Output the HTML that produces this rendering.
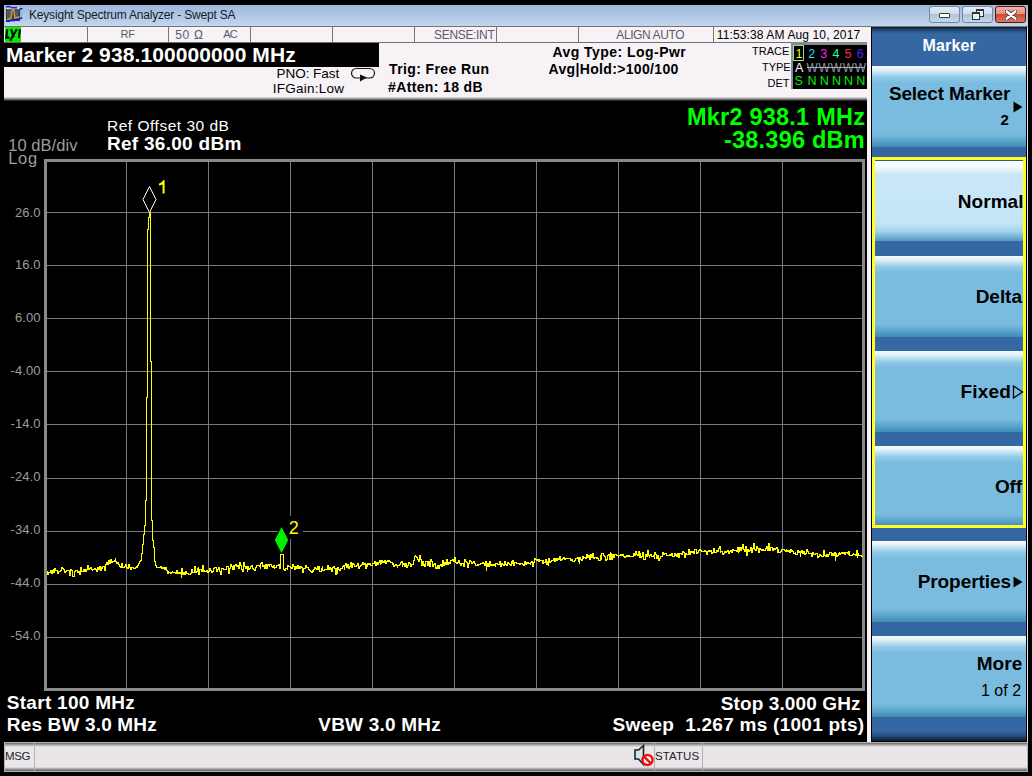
<!DOCTYPE html>
<html><head><meta charset="utf-8">
<style>
*{margin:0;padding:0;box-sizing:border-box}
html,body{width:1032px;height:776px;overflow:hidden;background:#000}
body{position:relative;font-family:"Liberation Sans",sans-serif}
.a{position:absolute}
.t{position:absolute;white-space:nowrap;line-height:1}
</style></head><body>
<!-- title bar -->
<div class="a" style="left:4px;top:5px;width:1024px;height:22px;background:linear-gradient(#9db8d9,#afc7e4 50%,#c3d7ed);border-bottom:1px solid #747474"></div>
<svg class="a" style="left:4px;top:4px" width="22" height="22" viewBox="0 0 22 22">
<rect x="2" y="5" width="14" height="12" fill="#3c3a3a"/>
<rect x="3" y="6" width="4" height="8" fill="#5a5858"/><rect x="10.5" y="6.5" width="4" height="7" fill="#5a5858"/>
<rect x="2" y="3.2" width="14" height="2" fill="#d8d4c8"/>
<rect x="2" y="2" width="5" height="1.5" fill="#2020ff"/><rect x="7" y="3" width="6" height="1.5" fill="#2020f0"/>
<rect x="16" y="5" width="2.2" height="9" fill="#7cc0e8"/><rect x="15.5" y="4" width="2.8" height="1.5" fill="#1010e0"/><rect x="15.5" y="13.5" width="2.8" height="1.5" fill="#1010e0"/>
<rect x="2" y="16.5" width="4" height="1.5" fill="#1010e0"/><rect x="6" y="15.8" width="5" height="1.5" fill="#1010e0"/><rect x="11" y="15" width="5" height="1.5" fill="#1010e0"/>
<polyline points="3,15.5 7,14.5 8.2,5.5 9.8,5.5 10.8,14 15.5,13" fill="none" stroke="#c8a840" stroke-width="1.4"/>
</svg>
<div class="t" style="left:29px;top:9px;font-size:12px;letter-spacing:-0.19px;color:#141c2c;">Keysight Spectrum Analyzer - Swept SA</div>
<div class="a" style="left:929px;top:6px;width:31px;height:17px;border:1px solid #7487a0;border-radius:3px;background:linear-gradient(#e3ebf5,#cfdcec 45%,#afc4dc 50%,#c5d6ea)"><div class="a" style="left:9px;top:6px;width:11px;height:5px;background:#fff;border:1px solid #3a3a3a;border-radius:1px"></div></div>
<div class="a" style="left:962px;top:6px;width:31px;height:17px;border:1px solid #7487a0;border-radius:3px;background:linear-gradient(#e3ebf5,#cfdcec 45%,#afc4dc 50%,#c5d6ea)"><div class="a" style="left:13px;top:2px;width:8px;height:8px;background:#e8f0f8;border:1px solid #333;border-top-width:2px"></div><div class="a" style="left:9px;top:5px;width:8px;height:8px;background:#e8f0f8;border:1px solid #333;border-top-width:2px"></div></div>
<div class="a" style="left:995px;top:6px;width:31px;height:17px;border:1px solid #5a1010;border-radius:3px;background:linear-gradient(#f2b5a5,#e5907c 45%,#cd4a2e 50%,#dc7a62)"><svg class="a" style="left:9px;top:3px" width="12" height="10" viewBox="0 0 12 10"><path d="M1.8 1.5 L10.2 8.5 M10.2 1.5 L1.8 8.5" stroke="#3a3a3a" stroke-width="4.2" stroke-linecap="round"/><path d="M1.8 1.5 L10.2 8.5 M10.2 1.5 L1.8 8.5" stroke="#fff" stroke-width="2.6" stroke-linecap="round"/></svg></div>

<!-- status row -->
<div class="a" style="left:4px;top:27px;width:863px;height:16px;background:#f6f2f6;border-bottom:1px solid #6e6e6e"></div>
<div class="a" style="left:5px;top:27px;width:16px;height:15px;background:#00f000"></div>
<svg class="a" style="left:0;top:0" width="24" height="44" viewBox="0 0 24 44"><path d="M7.3 29.3 L6.2 37.6 L9.4 37.6 M11.2 29.3 L13.6 37.2 M16.8 29.3 L10.2 40.6 M19.9 29.3 L18.8 38.2" fill="none" stroke="#000" stroke-width="2.1"/></svg>
<div class="a" style="left:87px;top:27px;width:1px;height:15px;background:#777"></div><div class="a" style="left:168px;top:27px;width:1px;height:15px;background:#777"></div><div class="a" style="left:250px;top:27px;width:1px;height:15px;background:#777"></div><div class="a" style="left:332px;top:27px;width:1px;height:15px;background:#777"></div><div class="a" style="left:414px;top:27px;width:1px;height:15px;background:#777"></div><div class="a" style="left:496px;top:27px;width:1px;height:15px;background:#777"></div><div class="a" style="left:578px;top:27px;width:1px;height:15px;background:#777"></div><div class="a" style="left:713px;top:27px;width:1px;height:15px;background:#777"></div>
<div class="t" style="left:120.5px;top:29px;font-size:11px;letter-spacing:-0.1px;color:#5a5a6a;">RF</div><div class="t" style="left:175.2px;top:29px;font-size:12px;letter-spacing:0.7px;color:#5a5a6a;">50 Ω</div><div class="t" style="left:223.3px;top:29px;font-size:11px;letter-spacing:-0.8px;color:#5a5a6a;">AC</div><div class="t" style="left:434.1px;top:29.2px;font-size:12px;letter-spacing:-0.34px;color:#5a5a6a;">SENSE:INT</div><div class="t" style="left:616.3px;top:28.8px;font-size:12px;letter-spacing:-0.4px;color:#5a5a6a;">ALIGN AUTO</div><div class="t" style="left:716.8px;top:28.9px;font-size:12px;letter-spacing:0.12px;color:#000;">11:53:38 AM Aug 10, 2017</div>

<!-- header -->
<div class="a" style="left:4px;top:43px;width:863px;height:58px;background:linear-gradient(#f6f2f6 0px,#f6f2f6 53.5px,#a8a4a8 55.5px,#484848 57px,#101010 58px)"></div>
<div class="a" style="left:4px;top:43px;width:375px;height:24px;background:#000"></div>
<div class="t" style="left:6px;top:44px;font-size:21px;letter-spacing:0.1px;font-weight:bold;color:#fff;">Marker 2 938.100000000 MHz</div>
<div class="t" style="left:276.6px;top:67.2px;font-size:13.5px;letter-spacing:-0.05px;color:#000;">PNO: Fast</div><div class="t" style="left:272.7px;top:82.1px;font-size:13.5px;letter-spacing:0.26px;color:#000;">IFGain:Low</div>
<svg class="a" style="left:350px;top:67px" width="27" height="16" viewBox="0 0 27 16">
<rect x="1.5" y="1.5" width="23" height="9.5" rx="4.7" fill="none" stroke="#111" stroke-width="1.2"/>
<polygon points="10,7.5 17,10.5 10,14.5" fill="#111"/>
</svg>
<div class="t" style="left:389.1px;top:62.4px;font-size:14px;letter-spacing:0.38px;font-weight:bold;color:#000;">Trig: Free Run</div><div class="t" style="left:388.1px;top:80.2px;font-size:14px;letter-spacing:0.35px;font-weight:bold;color:#000;">#Atten: 18 dB</div><div class="t" style="left:552.4px;top:45px;font-size:14px;letter-spacing:0.46px;font-weight:bold;color:#000;">Avg Type: Log-Pwr</div><div class="t" style="left:548.5px;top:62.3px;font-size:14px;letter-spacing:0.34px;font-weight:bold;color:#000;">Avg|Hold:&gt;100/100</div>
<div class="t" style="left:752.1px;top:46.2px;font-size:11px;letter-spacing:0.0px;color:#000;">TRACE</div><div class="t" style="left:762.1px;top:61.9px;font-size:11px;letter-spacing:-0.1px;color:#000;">TYPE</div><div class="t" style="left:767.5px;top:78px;font-size:11px;letter-spacing:0.0px;color:#000;">DET</div>
<div class="a" style="left:791px;top:42px;width:76px;height:47px;background:#000;border-top:3px solid #8a8a8a;border-left:2px solid #8a8a8a"></div>
<div class="a" style="left:793px;top:45px;width:11px;height:16px;border:1px solid #8ee08e"></div>
<div class="t" style="left:795.5px;top:47.5px;font-size:12.5px;color:#ffff00">1</div>
<div class="t" style="left:808.3px;top:47.5px;font-size:12.5px;color:#22ddff">2</div>
<div class="t" style="left:820.3px;top:47.5px;font-size:12.5px;color:#ff22ee">3</div>
<div class="t" style="left:832.4px;top:47.5px;font-size:12.5px;color:#22ff99">4</div>
<div class="t" style="left:844.6px;top:47.5px;font-size:12.5px;color:#ff2255">5</div>
<div class="t" style="left:856.8px;top:47.5px;font-size:12.5px;color:#5522ff">6</div>
<div class="t" style="left:795px;top:61.9px;font-size:12.5px;letter-spacing:0px;color:#fff;">A</div>
<div class="t" style="left:806.4px;top:62.3px;font-size:12px;color:#8a96a6">W</div><div class="t" style="left:818.5px;top:62.3px;font-size:12px;color:#8a96a6">W</div><div class="t" style="left:830.6px;top:62.3px;font-size:12px;color:#8a96a6">W</div><div class="t" style="left:842.7px;top:62.3px;font-size:12px;color:#8a96a6">W</div><div class="t" style="left:854.8px;top:62.3px;font-size:12px;color:#8a96a6">W</div>
<div class="a" style="left:807px;top:67px;width:58px;height:1px;background:#b8b0a8"></div>
<div class="t" style="left:807.5px;top:74.9px;font-size:12.5px;color:#00f000">N</div><div class="t" style="left:819.7px;top:74.9px;font-size:12.5px;color:#00f000">N</div><div class="t" style="left:831.9px;top:74.9px;font-size:12.5px;color:#00f000">N</div><div class="t" style="left:844.1px;top:74.9px;font-size:12.5px;color:#00f000">N</div><div class="t" style="left:856.3px;top:74.9px;font-size:12.5px;color:#00f000">N</div>
<div class="t" style="left:794.6px;top:75.1px;font-size:12.5px;letter-spacing:0px;color:#00f000;">S</div>

<!-- right strip + softkeys -->
<div class="a" style="left:867px;top:27px;width:4px;height:715px;background:#f6f2f6"></div>
<div class="a" style="left:871px;top:27px;width:157px;height:715px;background:#000"></div>
<div class="a" style="left:872px;top:27px;width:154px;height:714px;background:linear-gradient(#0c1a2c 0px,#204678 3px,#3568a3 7px,#3568a3 704px,#254b7e 709px,#0c1a2c 714px)"></div>
<div class="a" style="left:1027px;top:27px;width:1px;height:715px;background:#e8e4e8"></div>
<div class="t" style="left:922.6px;top:38.4px;font-size:16px;letter-spacing:0.12px;font-weight:bold;color:#fff;">Marker</div>
<div class="a" style="left:872px;top:66px;width:154px;height:81px;background:linear-gradient(#f8fcff 0px,#e0f0f8 4px,#92cae8 11px,#7abce0 17px,#7abce0 68px,#68aed4 72px,#3f8cb4 81px)"></div>
<div class="t" style="left:888.9px;top:84.4px;font-size:19px;letter-spacing:-0.18px;font-weight:bold;color:#000;">Select Marker</div><div class="t" style="left:1000.6px;top:112px;font-size:15px;letter-spacing:0px;font-weight:bold;color:#000;">2</div>
<svg class="a" style="left:1013px;top:101px" width="10" height="12" viewBox="0 0 10 12"><polygon points="0.5,0.5 9.5,6 0.5,11.5" fill="#000"/></svg>
<div class="a" style="left:872px;top:157px;width:154px;height:371px;border:3px solid #ffff22"></div>
<div class="a" style="left:875px;top:160px;width:148px;height:1px;background:#2a58a0"></div><div class="a" style="left:875px;top:161px;width:148px;height:80px;background:linear-gradient(#ffffff 0px,#f3fafd 6px,#c8e6f8 14px,#c5e5f7 62px,#a6d3ec 70px,#4c94bc 81px)"></div>
<div class="a" style="left:875px;top:256px;width:148px;height:81px;background:linear-gradient(#f8fcff 0px,#e0f0f8 4px,#92cae8 11px,#7abce0 17px,#7abce0 68px,#68aed4 72px,#3f8cb4 81px)"></div>
<div class="a" style="left:875px;top:351px;width:148px;height:81px;background:linear-gradient(#f8fcff 0px,#e0f0f8 4px,#92cae8 11px,#7abce0 17px,#7abce0 68px,#68aed4 72px,#3f8cb4 81px)"></div>
<div class="a" style="left:875px;top:446px;width:148px;height:79px;background:linear-gradient(#f8fcff 0px,#e0f0f8 4px,#92cae8 11px,#7abce0 17px,#7abce0 68px,#68aed4 72px,#3f8cb4 81px)"></div>
<div class="t" style="left:957.7px;top:191.9px;font-size:19px;letter-spacing:0.08px;font-weight:bold;color:#000;">Normal</div><div class="t" style="left:975.7px;top:286.7px;font-size:19px;letter-spacing:-0.05px;font-weight:bold;color:#000;">Delta</div><div class="t" style="left:960.6px;top:381.7px;font-size:19px;letter-spacing:0.17px;font-weight:bold;color:#000;">Fixed</div><div class="t" style="left:995px;top:476.9px;font-size:19px;letter-spacing:-0.2px;font-weight:bold;color:#000;">Off</div>
<svg class="a" style="left:1012px;top:385px" width="12" height="14" viewBox="0 0 12 14"><polygon points="1.5,1 10.5,7 1.5,13" fill="none" stroke="#000" stroke-width="1.3"/></svg>
<div class="a" style="left:872px;top:541px;width:154px;height:81px;background:linear-gradient(#f8fcff 0px,#e0f0f8 4px,#92cae8 11px,#7abce0 17px,#7abce0 68px,#68aed4 72px,#3f8cb4 81px)"></div>
<div class="t" style="left:917.7px;top:571.9px;font-size:19px;letter-spacing:-0.08px;font-weight:bold;color:#000;">Properties</div>
<svg class="a" style="left:1013px;top:576px" width="10" height="12" viewBox="0 0 10 12"><polygon points="0.5,0.5 9.5,6 0.5,11.5" fill="#000"/></svg>
<div class="a" style="left:872px;top:636px;width:154px;height:81px;background:linear-gradient(#f8fcff 0px,#e0f0f8 4px,#92cae8 11px,#7abce0 17px,#7abce0 68px,#68aed4 72px,#3f8cb4 81px)"></div>
<div class="t" style="left:976.7px;top:654.1px;font-size:19px;letter-spacing:0.1px;font-weight:bold;color:#000;">More</div><div class="t" style="left:981px;top:683.4px;font-size:16px;letter-spacing:0.0px;color:#000;">1 of 2</div>

<!-- graph -->
<svg class="a" style="left:0;top:0" width="867" height="776">
<g fill="#7a7a7a">
<rect x="47" y="212" width="815" height="1"/><rect x="47" y="265" width="815" height="1"/><rect x="47" y="318" width="815" height="1"/><rect x="47" y="371" width="815" height="1"/><rect x="47" y="424" width="815" height="1"/><rect x="47" y="478" width="815" height="1"/><rect x="47" y="531" width="815" height="1"/><rect x="47" y="584" width="815" height="1"/><rect x="47" y="637" width="815" height="1"/><rect x="126" y="162" width="1" height="526"/><rect x="208" y="162" width="1" height="526"/><rect x="290" y="162" width="1" height="526"/><rect x="372" y="162" width="1" height="526"/><rect x="454" y="162" width="1" height="526"/><rect x="536" y="162" width="1" height="526"/><rect x="618" y="162" width="1" height="526"/><rect x="700" y="162" width="1" height="526"/><rect x="782" y="162" width="1" height="526"/>
</g>
<rect x="45.5" y="160.5" width="818" height="529" fill="none" stroke="#8a8a8a" stroke-width="3" shape-rendering="crispEdges"/>
<defs><clipPath id="cp"><rect x="0" y="0" width="139" height="776"/><rect x="158" y="0" width="120" height="776"/><rect x="286" y="0" width="600" height="776"/></clipPath></defs><g fill="none" stroke="#ffff00" stroke-width="1" shape-rendering="crispEdges"><path id="tr" d="M46.5,571.5H47.5V574.5H48.5V571.5V572.5H49.5H50.5V570.5H51.5V573.5H52.5V570.5H53.5V568.5V572.5H54.5V568.5H55.5V570.5H56.5H57.5V572.5V573.5H58.5V571.5H59.5H60.5V570.5H61.5V567.5H62.5V568.5H63.5V569.5H64.5V572.5H65.5V571.5H66.5V569.5V570.5H67.5H68.5H69.5V575.5H70.5V572.5V569.5H71.5V570.5H72.5V576.5H73.5H74.5V571.5H75.5V570.5H76.5H77.5V572.5H78.5V571.5H79.5V574.5H80.5V567.5H81.5V571.5H82.5H83.5V569.5H84.5V571.5V569.5H85.5V571.5H86.5V569.5H87.5V565.5H88.5V569.5H89.5V568.5H90.5V567.5H91.5V569.5H92.5V570.5V569.5H93.5H94.5V568.5H95.5V569.5H96.5V571.5H97.5V566.5V567.5H98.5V569.5H99.5V566.5H100.5V570.5H101.5V566.5V568.5H102.5V566.5H103.5H104.5V570.5H105.5V564.5H106.5V562.5H107.5V564.5H108.5V560.5H109.5V563.5H110.5V560.5V559.5H111.5V562.5H112.5V561.5H113.5H114.5V560.5H115.5V557.5V561.5H116.5V563.5H117.5V562.5H118.5V564.5H119.5V565.5V566.5H120.5V567.5H121.5V563.5H122.5V567.5H123.5V566.5V567.5H124.5V566.5H125.5V564.5H126.5V567.5H127.5V568.5H128.5V566.5V564.5H129.5V567.5H130.5V569.5H131.5V567.5H132.5H133.5V568.5H134.5H135.5V567.5H136.5V566.5H137.5V567.5V565.5H138.5V563.5H139.5V561.5H140.5V560.5H141.5V558.5V553.5H142.5V544.5H143.5V534.5H144.5V525.5H145.5V517.5V500.5H146.5V397.5H147.5V229.5H148.5V217.5H149.5V212.5H150.5V230.5V361.5H151.5V520.5H152.5V540.5H153.5V547.5H154.5V554.5V561.5H155.5V565.5H156.5V567.5H157.5H158.5H159.5H160.5V566.5H161.5V568.5H162.5V567.5H163.5V568.5V567.5H164.5V569.5H165.5V567.5H166.5V570.5H167.5V573.5H168.5V570.5V572.5H169.5H170.5V573.5H171.5V572.5H172.5V570.5V572.5H173.5H174.5H175.5V573.5H176.5V572.5V570.5H177.5V573.5H178.5V572.5H179.5V573.5H180.5V572.5H181.5V577.5V568.5H182.5V574.5H183.5V572.5H184.5V574.5H185.5V571.5H186.5V573.5H187.5H188.5V574.5H189.5H190.5V572.5V573.5H191.5V569.5H192.5V572.5H193.5H194.5V569.5V566.5H195.5V572.5H196.5V571.5H197.5V568.5H198.5V566.5V574.5H199.5V569.5H200.5H201.5V571.5H202.5V565.5H203.5V571.5V570.5H204.5V571.5H205.5H206.5V570.5H207.5V572.5H208.5V571.5H209.5V568.5H210.5V570.5H211.5V572.5H212.5V571.5H213.5V568.5H214.5V567.5H215.5H216.5V566.5V571.5H217.5V569.5H218.5V567.5H219.5V571.5H220.5V574.5H221.5V570.5V568.5H222.5H223.5V569.5H224.5H225.5V568.5V569.5H226.5V566.5H227.5H228.5V573.5H229.5V571.5V568.5H230.5V564.5H231.5V566.5H232.5V569.5H233.5V565.5H234.5V569.5V565.5H235.5V564.5H236.5V566.5H237.5V565.5H238.5V568.5H239.5V562.5H240.5V565.5H241.5V569.5H242.5V571.5H243.5V565.5V562.5H244.5V566.5H245.5V568.5H246.5V566.5H247.5V571.5V566.5H248.5V569.5H249.5V568.5H250.5V566.5H251.5V565.5H252.5V564.5V568.5H253.5V569.5H254.5V570.5H255.5V567.5H256.5V565.5H257.5H258.5H259.5V566.5H260.5V568.5V563.5H261.5V562.5H262.5V566.5H263.5V565.5H264.5V568.5H265.5V564.5H266.5V568.5H267.5V564.5H268.5V565.5H269.5V566.5V564.5H270.5H271.5V566.5H272.5V567.5H273.5V565.5H274.5V568.5V567.5H275.5H276.5V565.5H277.5H278.5V564.5H279.5V568.5H280.5V554.5H281.5H282.5H283.5V569.5H284.5V570.5H285.5V568.5H286.5H287.5V569.5V565.5H288.5V566.5H289.5H290.5V567.5H291.5V568.5H292.5V564.5H293.5V566.5H294.5V569.5H295.5V566.5H296.5V568.5H297.5V565.5H298.5V568.5H299.5V566.5H300.5V568.5V566.5H301.5V567.5H302.5V572.5H303.5V568.5H304.5H305.5V564.5V565.5H306.5V567.5H307.5H308.5V569.5H309.5V568.5V570.5H310.5V571.5H311.5V572.5H312.5V570.5H313.5V571.5V569.5H314.5V567.5H315.5V568.5H316.5V569.5H317.5V566.5H318.5V569.5V566.5H319.5V571.5H320.5H321.5V568.5H322.5V565.5V570.5H323.5H324.5V569.5H325.5H326.5H327.5V564.5V565.5H328.5V569.5H329.5V567.5H330.5V569.5H331.5V567.5V571.5H332.5V567.5H333.5V566.5H334.5V568.5H335.5V574.5H336.5V567.5V573.5H337.5V567.5H338.5V569.5H339.5V570.5H340.5V569.5V568.5H341.5H342.5V566.5H343.5V565.5H344.5V569.5V565.5H345.5V563.5H346.5V567.5H347.5V564.5H348.5V568.5H349.5V566.5H350.5V562.5H351.5V567.5H352.5V563.5H353.5V564.5H354.5V566.5H355.5H356.5V565.5H357.5V563.5H358.5V565.5V568.5H359.5V566.5H360.5V565.5H361.5V564.5H362.5V562.5H363.5V564.5H364.5V563.5H365.5V568.5H366.5V563.5V566.5H367.5V563.5H368.5V564.5H369.5V563.5H370.5V565.5H371.5V564.5V565.5H372.5V563.5H373.5H374.5V561.5H375.5V563.5V565.5H376.5V562.5H377.5V564.5H378.5V562.5H379.5V560.5H380.5V564.5V563.5H381.5V560.5H382.5V562.5H383.5V561.5H384.5V562.5V560.5H385.5V563.5H386.5V561.5H387.5V560.5H388.5V561.5H389.5V559.5V561.5H390.5V562.5H391.5H392.5V564.5H393.5V562.5V566.5H394.5V565.5H395.5V564.5H396.5V565.5H397.5V567.5V565.5H398.5H399.5V564.5H400.5V562.5H401.5V561.5H402.5V566.5V564.5H403.5V563.5H404.5V566.5H405.5V563.5H406.5V564.5V567.5H407.5V565.5H408.5V562.5H409.5V563.5H410.5V566.5H411.5V564.5H412.5H413.5V560.5H414.5V556.5H415.5V554.5V556.5H416.5V557.5H417.5V559.5H418.5V561.5H419.5V557.5V555.5H420.5V559.5H421.5V565.5H422.5V561.5H423.5V565.5H424.5V563.5V566.5H425.5V561.5H426.5H427.5V565.5H428.5V563.5V561.5H429.5V566.5H430.5V559.5H431.5V561.5H432.5V566.5H433.5V565.5V564.5H434.5V563.5H435.5V568.5H436.5V567.5H437.5V568.5V565.5H438.5V568.5H439.5V565.5H440.5V564.5H441.5V566.5H442.5V564.5V560.5H443.5V565.5H444.5V562.5H445.5V564.5H446.5V563.5V559.5H447.5V564.5H448.5V562.5H449.5V563.5H450.5V561.5V560.5H451.5H452.5V559.5H453.5V561.5H454.5V557.5H455.5V561.5V562.5H456.5V563.5H457.5V562.5H458.5V560.5H459.5V561.5V563.5H460.5V565.5H461.5V563.5H462.5H463.5V566.5H464.5V560.5V559.5H465.5V561.5H466.5V562.5H467.5V567.5H468.5V564.5V563.5H469.5V560.5H470.5V561.5H471.5V563.5H472.5V562.5H473.5V561.5H474.5V563.5H475.5V565.5H476.5H477.5V563.5V565.5H478.5V564.5H479.5H480.5V563.5H481.5H482.5V562.5H483.5V563.5H484.5V565.5H485.5V561.5H486.5V570.5V566.5H487.5V563.5H488.5V566.5H489.5V561.5H490.5V564.5V565.5H491.5V564.5H492.5V565.5H493.5V564.5H494.5V565.5H495.5V566.5V563.5H496.5H497.5V564.5H498.5H499.5V561.5H500.5V566.5H501.5V563.5H502.5V564.5H503.5V565.5H504.5V561.5H505.5V564.5H506.5V565.5H507.5V562.5H508.5V563.5H509.5V564.5H510.5V565.5H511.5V561.5H512.5V563.5V560.5H513.5V565.5H514.5V562.5H515.5H516.5V563.5H517.5H518.5H519.5V564.5H520.5V563.5H521.5H522.5V564.5H523.5V565.5H524.5V561.5H525.5V564.5H526.5V561.5V563.5H527.5V562.5H528.5V563.5H529.5H530.5V564.5V562.5H531.5V561.5H532.5V566.5H533.5V562.5H534.5V558.5H535.5V559.5H536.5V560.5H537.5V559.5H538.5V561.5H539.5V558.5V560.5H540.5H541.5H542.5V563.5H543.5V559.5V562.5H544.5H545.5V559.5H546.5V564.5H547.5V561.5H548.5V565.5V558.5H549.5V562.5H550.5V561.5H551.5V560.5H552.5V559.5V560.5H553.5V558.5H554.5V561.5H555.5V558.5H556.5V560.5H557.5V558.5H558.5V559.5H559.5V556.5H560.5V560.5H561.5V558.5V559.5H562.5V558.5H563.5V557.5H564.5V559.5H565.5V558.5H566.5H567.5H568.5H569.5H570.5V560.5H571.5V559.5H572.5V561.5H573.5H574.5V559.5V560.5H575.5V558.5H576.5H577.5V557.5H578.5V561.5H579.5V563.5V557.5H580.5V559.5H581.5V560.5H582.5V556.5H583.5V558.5V557.5H584.5H585.5V558.5H586.5V554.5H587.5V555.5V557.5H588.5V555.5H589.5V559.5H590.5V554.5H591.5V557.5H592.5V556.5V553.5H593.5V558.5H594.5V557.5H595.5H596.5V558.5V557.5H597.5V558.5H598.5V560.5H599.5H600.5V555.5H601.5V559.5V553.5H602.5H603.5V555.5H604.5V556.5H605.5V558.5V560.5H606.5V559.5H607.5V555.5H608.5V554.5H609.5V559.5H610.5V551.5V553.5H611.5V559.5H612.5V554.5H613.5V557.5H614.5V554.5H615.5H616.5V555.5H617.5H618.5V557.5V555.5H619.5H620.5V554.5H621.5V555.5H622.5V554.5H623.5V556.5H624.5V557.5H625.5V556.5H626.5V555.5H627.5V556.5H628.5V555.5H629.5V556.5H630.5H631.5H632.5V555.5V556.5H633.5V553.5H634.5V555.5H635.5V551.5H636.5V554.5H637.5V555.5H638.5V551.5H639.5V557.5H640.5V552.5V557.5H641.5V556.5H642.5V552.5H643.5V559.5H644.5H645.5V557.5V554.5H646.5V556.5H647.5V550.5H648.5V555.5H649.5V557.5V555.5H650.5V554.5H651.5V556.5H652.5H653.5V555.5H654.5V558.5V552.5H655.5V554.5H656.5V558.5H657.5V555.5H658.5V554.5V560.5H659.5V558.5H660.5V556.5H661.5H662.5V552.5H663.5V554.5H664.5V553.5H665.5H666.5V555.5H667.5H668.5H669.5V554.5H670.5V555.5H671.5V554.5V553.5H672.5V556.5H673.5H674.5V553.5H675.5V555.5H676.5V553.5V556.5H677.5V553.5H678.5V557.5H679.5V553.5H680.5V552.5V553.5H681.5V554.5H682.5V551.5H683.5V552.5H684.5V557.5H685.5V553.5H686.5V554.5H687.5H688.5V549.5H689.5V552.5V554.5H690.5V551.5H691.5V552.5H692.5V551.5H693.5V553.5H694.5V549.5H695.5H696.5V553.5H697.5V552.5H698.5V551.5V550.5H699.5V549.5H700.5V550.5H701.5V551.5H702.5H703.5H704.5V550.5H705.5V551.5H706.5V554.5H707.5V551.5H708.5V550.5H709.5V551.5H710.5V550.5H711.5V551.5V553.5H712.5V552.5H713.5V548.5H714.5V552.5H715.5H716.5V550.5H717.5V551.5H718.5V548.5H719.5V546.5H720.5V552.5V551.5H721.5H722.5V554.5H723.5V553.5H724.5V551.5H725.5V552.5H726.5V551.5H727.5V550.5H728.5V553.5H729.5V551.5H730.5V550.5H731.5V552.5H732.5V549.5H733.5V550.5H734.5H735.5H736.5V551.5H737.5V547.5H738.5V552.5V551.5H739.5V547.5H740.5V550.5H741.5V547.5H742.5V548.5V544.5H743.5V549.5H744.5V551.5H745.5V546.5H746.5V555.5H747.5V551.5V549.5H748.5V551.5H749.5V550.5H750.5V547.5H751.5V549.5V552.5H752.5V548.5H753.5V543.5H754.5V549.5H755.5V548.5V550.5H756.5V546.5H757.5V548.5H758.5V552.5H759.5V548.5H760.5V549.5H761.5V550.5H762.5V549.5H763.5V550.5H764.5V549.5V550.5H765.5V548.5H766.5V546.5H767.5V550.5H768.5V543.5H769.5V546.5V550.5H770.5V547.5H771.5H772.5V550.5H773.5V547.5V548.5H774.5V549.5H775.5V548.5H776.5V547.5H777.5V552.5H778.5V548.5V552.5H779.5H780.5V551.5H781.5V549.5H782.5V548.5V549.5H783.5H784.5V550.5H785.5V551.5H786.5V548.5V550.5H787.5V551.5H788.5V550.5H789.5V552.5H790.5V549.5H791.5V551.5V550.5H792.5V551.5H793.5V553.5H794.5H795.5V551.5V554.5H796.5H797.5V550.5H798.5V552.5H799.5V551.5H800.5V556.5V552.5H801.5V550.5H802.5V553.5H803.5V551.5H804.5V554.5H805.5V553.5H806.5V549.5H807.5V551.5H808.5V553.5H809.5H810.5H811.5V556.5H812.5V552.5H813.5V554.5H814.5H815.5V553.5H816.5H817.5V557.5H818.5V556.5H819.5V554.5H820.5V555.5H821.5V556.5H822.5H823.5V550.5H824.5V555.5H825.5V556.5H826.5V555.5V554.5H827.5V556.5H828.5V554.5H829.5V552.5H830.5H831.5V555.5H832.5V553.5H833.5V555.5H834.5V552.5H835.5V560.5V553.5H836.5V556.5H837.5V555.5H838.5V553.5H839.5V551.5V554.5H840.5V553.5H841.5V552.5H842.5V553.5H843.5V552.5H844.5V551.5V554.5H845.5V552.5H846.5H847.5V553.5H848.5V554.5V551.5H849.5V555.5H850.5H851.5H852.5V554.5H853.5V552.5V554.5H854.5H855.5V555.5H856.5V550.5H857.5V557.5V553.5H858.5V555.5H859.5H860.5H861.5V556.5H862.5"/></g>
<polygon points="149.5,186.5 156,199.5 149.5,212.5 143,199.5" fill="#000" stroke="#fff" stroke-width="1"/>
<rect x="278" y="516" width="25" height="23" fill="#000"/>
<polygon points="281.5,527 288.2,540 281.5,553.3 274.8,540" fill="#00f000"/>
</svg>
<svg class="a" style="left:155px;top:176px" width="14" height="20" viewBox="0 0 14 20"><path d="M7.6 4.2 L9.6 4.2 L9.6 17.6 L7.6 17.6 Z M4 7.6 C6 6.8 7.4 5.6 8.2 4.2 L9.2 4.6 L8.6 8 C7.4 8.6 5.8 9.2 4 9.4 Z" fill="#ffff00"/></svg><div class="t" style="left:288.8px;top:519.3px;font-size:18px;letter-spacing:0px;color:#ffff00;">2</div>
<div class="t" style="left:8.2px;top:136.7px;font-size:16.5px;letter-spacing:0.05px;color:#9c9c9c;">10 dB/div</div><div class="t" style="left:8.2px;top:150.2px;font-size:16.5px;letter-spacing:0.7px;color:#9c9c9c;">Log</div>
<div class="t" style="left:107px;top:118.4px;font-size:15.5px;letter-spacing:0.51px;color:#fff;">Ref Offset 30 dB</div><div class="t" style="left:107px;top:134.4px;font-size:19px;letter-spacing:0.28px;font-weight:bold;color:#fff;">Ref 36.00 dBm</div>
<div class="t" style="left:687px;top:106px;font-size:23.5px;letter-spacing:0.22px;font-weight:bold;color:#00ff00;">Mkr2 938.1 MHz</div><div class="t" style="left:724px;top:129.2px;font-size:23.5px;letter-spacing:0.22px;font-weight:bold;color:#00ff00;">-38.396 dBm</div>
<div class="t" style="left:0;width:40.6px;text-align:right;top:205.5px;font-size:13px;letter-spacing:0.1px;color:#9c9c9c">26.0</div><div class="t" style="left:0;width:40.6px;text-align:right;top:258.4px;font-size:13px;letter-spacing:0.1px;color:#9c9c9c">16.0</div><div class="t" style="left:0;width:40.6px;text-align:right;top:311.4px;font-size:13px;letter-spacing:0.1px;color:#9c9c9c">6.00</div><div class="t" style="left:0;width:40.6px;text-align:right;top:364.4px;font-size:13px;letter-spacing:0.1px;color:#9c9c9c">-4.00</div><div class="t" style="left:0;width:40.6px;text-align:right;top:417.3px;font-size:13px;letter-spacing:0.1px;color:#9c9c9c">-14.0</div><div class="t" style="left:0;width:40.6px;text-align:right;top:470.2px;font-size:13px;letter-spacing:0.1px;color:#9c9c9c">-24.0</div><div class="t" style="left:0;width:40.6px;text-align:right;top:523.2px;font-size:13px;letter-spacing:0.1px;color:#9c9c9c">-34.0</div><div class="t" style="left:0;width:40.6px;text-align:right;top:576.2px;font-size:13px;letter-spacing:0.1px;color:#9c9c9c">-44.0</div><div class="t" style="left:0;width:40.6px;text-align:right;top:629.1px;font-size:13px;letter-spacing:0.1px;color:#9c9c9c">-54.0</div>
<div class="t" style="left:6.8px;top:693.2px;font-size:19px;letter-spacing:0.28px;font-weight:bold;color:#fff;">Start 100 MHz</div><div class="t" style="left:6.8px;top:715.4px;font-size:19px;letter-spacing:0.16px;font-weight:bold;color:#fff;">Res BW 3.0 MHz</div><div class="t" style="left:318.3px;top:714.9px;font-size:19px;letter-spacing:0.2px;font-weight:bold;color:#fff;">VBW 3.0 MHz</div><div class="t" style="left:720.7px;top:693.5px;font-size:19px;letter-spacing:0.12px;font-weight:bold;color:#fff;">Stop 3.000 GHz</div><div class="t" style="left:612.6px;top:715.3px;font-size:19px;letter-spacing:0.26px;font-weight:bold;color:#fff;">Sweep&nbsp; 1.267 ms (1001 pts)</div>

<!-- msg bar -->
<div class="a" style="left:4px;top:742px;width:1024px;height:30px;background:#b4b0b4"></div>
<div class="a" style="left:5px;top:743px;width:29px;height:28px;background:linear-gradient(#6a6a6a 0px,#8a888a 1px,#d0ccd0 3px,#e9e5e9 4px,#e9e5e9 24px,#c8c4c8 25px,#7a787a 27px,#6a6a6a 28px)"></div><div class="a" style="left:35px;top:743px;width:619px;height:28px;background:linear-gradient(#6a6a6a 0px,#8a888a 1px,#d0ccd0 3px,#e9e5e9 4px,#e9e5e9 24px,#c8c4c8 25px,#7a787a 27px,#6a6a6a 28px)"></div><div class="a" style="left:655px;top:743px;width:47px;height:28px;background:linear-gradient(#6a6a6a 0px,#8a888a 1px,#d0ccd0 3px,#e9e5e9 4px,#e9e5e9 24px,#c8c4c8 25px,#7a787a 27px,#6a6a6a 28px)"></div><div class="a" style="left:703px;top:743px;width:324px;height:28px;background:linear-gradient(#6a6a6a 0px,#8a888a 1px,#d0ccd0 3px,#e9e5e9 4px,#e9e5e9 24px,#c8c4c8 25px,#7a787a 27px,#6a6a6a 28px)"></div>
<div class="t" style="left:5px;top:750.9px;font-size:11.5px;letter-spacing:-0.4px;color:#222;">MSG</div><div class="t" style="left:654.9px;top:751px;font-size:11.5px;letter-spacing:0.12px;color:#222;">STATUS</div>
<svg class="a" style="left:633px;top:744px" width="22" height="24" viewBox="0 0 22 24">
<polygon points="2,6 5.5,6 10.5,1.5 10.5,20.5 5.5,15 2,15" fill="#d4e4f4" stroke="#222" stroke-width="1.6"/>
<circle cx="14.5" cy="16" r="5" fill="#fff" stroke="#ee1111" stroke-width="2.4"/>
<line x1="11.3" y1="12.8" x2="17.7" y2="19.2" stroke="#ee1111" stroke-width="2.4"/>
</svg>
</body></html>
